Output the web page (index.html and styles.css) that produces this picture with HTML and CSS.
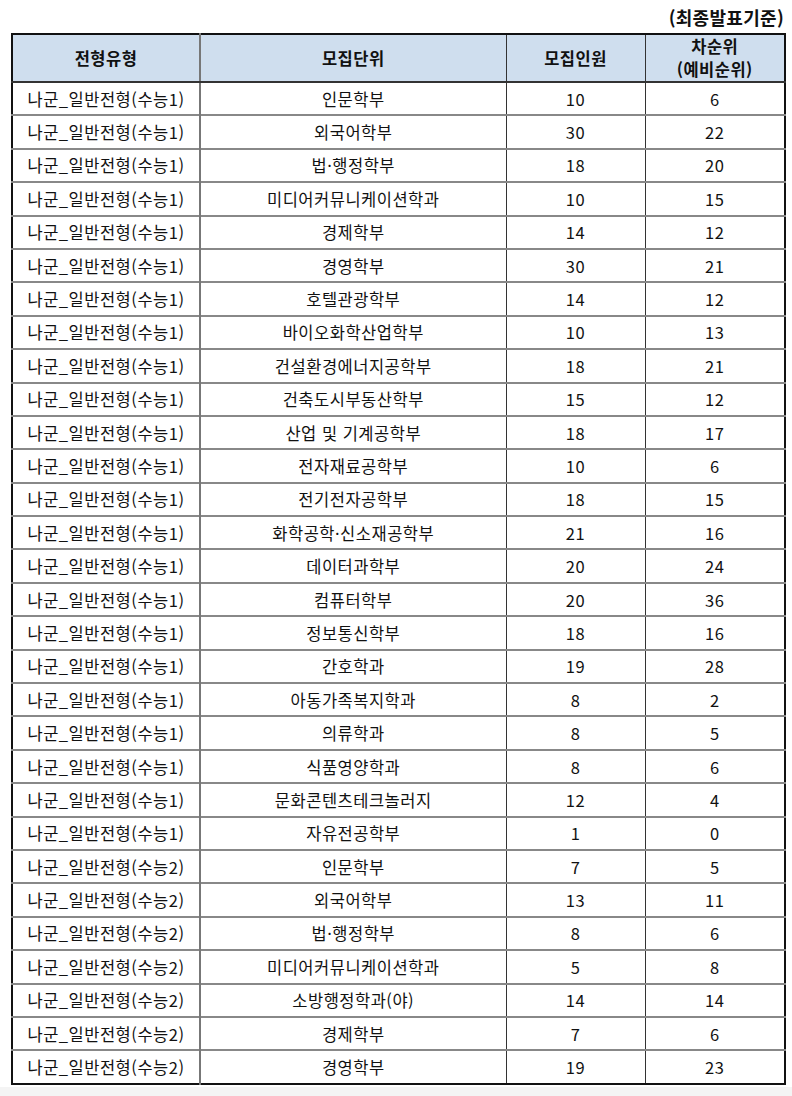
FILE: index.html
```html
<!DOCTYPE html>
<html lang="ko">
<head>
<meta charset="utf-8">
<link rel="stylesheet" href="styles.css">
</head>
<body>
<div class="sheet">
  <div class="caption">(최종발표기준)</div>
  <table class="grid">
    <colgroup>
      <col class="c1"><col class="c2"><col class="c3"><col class="c4">
    </colgroup>
    <thead>
      <tr><th>전형유형</th><th>모집단위</th><th>모집인원</th><th>차순위<br>(예비순위)</th></tr>
    </thead>
    <tbody>
      <tr><td>나군_일반전형(수능1)</td><td>인문학부</td><td>10</td><td>6</td></tr>
      <tr><td>나군_일반전형(수능1)</td><td>외국어학부</td><td>30</td><td>22</td></tr>
      <tr><td>나군_일반전형(수능1)</td><td>법·행정학부</td><td>18</td><td>20</td></tr>
      <tr><td>나군_일반전형(수능1)</td><td>미디어커뮤니케이션학과</td><td>10</td><td>15</td></tr>
      <tr><td>나군_일반전형(수능1)</td><td>경제학부</td><td>14</td><td>12</td></tr>
      <tr><td>나군_일반전형(수능1)</td><td>경영학부</td><td>30</td><td>21</td></tr>
      <tr><td>나군_일반전형(수능1)</td><td>호텔관광학부</td><td>14</td><td>12</td></tr>
      <tr><td>나군_일반전형(수능1)</td><td>바이오화학산업학부</td><td>10</td><td>13</td></tr>
      <tr><td>나군_일반전형(수능1)</td><td>건설환경에너지공학부</td><td>18</td><td>21</td></tr>
      <tr><td>나군_일반전형(수능1)</td><td>건축도시부동산학부</td><td>15</td><td>12</td></tr>
      <tr><td>나군_일반전형(수능1)</td><td>산업 및 기계공학부</td><td>18</td><td>17</td></tr>
      <tr><td>나군_일반전형(수능1)</td><td>전자재료공학부</td><td>10</td><td>6</td></tr>
      <tr><td>나군_일반전형(수능1)</td><td>전기전자공학부</td><td>18</td><td>15</td></tr>
      <tr><td>나군_일반전형(수능1)</td><td>화학공학·신소재공학부</td><td>21</td><td>16</td></tr>
      <tr><td>나군_일반전형(수능1)</td><td>데이터과학부</td><td>20</td><td>24</td></tr>
      <tr><td>나군_일반전형(수능1)</td><td>컴퓨터학부</td><td>20</td><td>36</td></tr>
      <tr><td>나군_일반전형(수능1)</td><td>정보통신학부</td><td>18</td><td>16</td></tr>
      <tr><td>나군_일반전형(수능1)</td><td>간호학과</td><td>19</td><td>28</td></tr>
      <tr><td>나군_일반전형(수능1)</td><td>아동가족복지학과</td><td>8</td><td>2</td></tr>
      <tr><td>나군_일반전형(수능1)</td><td>의류학과</td><td>8</td><td>5</td></tr>
      <tr><td>나군_일반전형(수능1)</td><td>식품영양학과</td><td>8</td><td>6</td></tr>
      <tr><td>나군_일반전형(수능1)</td><td>문화콘텐츠테크놀러지</td><td>12</td><td>4</td></tr>
      <tr><td>나군_일반전형(수능1)</td><td>자유전공학부</td><td>1</td><td>0</td></tr>
      <tr><td>나군_일반전형(수능2)</td><td>인문학부</td><td>7</td><td>5</td></tr>
      <tr><td>나군_일반전형(수능2)</td><td>외국어학부</td><td>13</td><td>11</td></tr>
      <tr><td>나군_일반전형(수능2)</td><td>법·행정학부</td><td>8</td><td>6</td></tr>
      <tr><td>나군_일반전형(수능2)</td><td>미디어커뮤니케이션학과</td><td>5</td><td>8</td></tr>
      <tr><td>나군_일반전형(수능2)</td><td>소방행정학과(야)</td><td>14</td><td>14</td></tr>
      <tr><td>나군_일반전형(수능2)</td><td>경제학부</td><td>7</td><td>6</td></tr>
      <tr><td>나군_일반전형(수능2)</td><td>경영학부</td><td>19</td><td>23</td></tr>
    </tbody>
  </table>
</div>
</body>
</html>
```

FILE: styles.css
```css
html, body {
  margin: 0;
  padding: 0;
}
body {
  background: #f4f4f4;
  font-family: "Noto Sans CJK KR", "Noto Sans", sans-serif;
  color: #111;
}
.sheet {
  background: #fff;
  padding: 0 8px 2px 11px;
}
.caption {
  height: 33px;
  display: flex;
  align-items: center;
  justify-content: flex-end;
  font-weight: 700;
  font-size: 18px;
  letter-spacing: 0.3px;
  box-sizing: border-box;
}
.grid {
  width: 773px;
  border-collapse: collapse;
  table-layout: fixed;
  border: 2px solid #111;
}
.c1 { width: 188px; }
.c2 { width: 306px; }
.c3 { width: 139px; }
.c4 { width: 140px; }
.grid th {
  background: #cfdeee;
  font-weight: 700;
  font-size: 16.5px;
  letter-spacing: 0.5px;
  line-height: 23px;
  height: 44px;
  padding: 0;
  border-bottom: 2px solid #333;
  border-left: 1px solid #333;
}
.grid td {
  font-size: 16.5px;
  letter-spacing: 0.5px;
  text-align: center;
  height: 31.4px;
  padding: 0;
  border-top: 2px solid #888;
  border-left: 1px solid #333;
}
.grid th:first-child, .grid td:first-child { border-left: none; }
.grid th:nth-child(2), .grid td:nth-child(2) { border-left: 2px solid #777; }
.grid tbody tr:first-child td { border-top: none; }
```
